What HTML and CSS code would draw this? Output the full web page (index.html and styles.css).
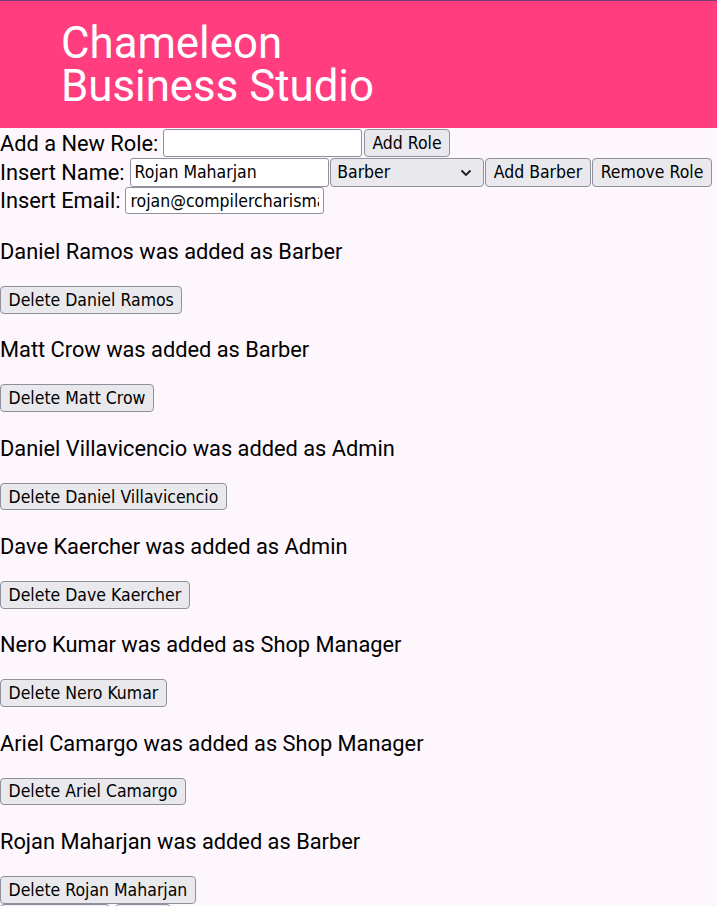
FILE: index.html
```html
<!DOCTYPE html>
<html lang="en">
<head>
<meta charset="utf-8">
<title>Chameleon Business Studio</title>
<link rel="stylesheet" href="styles.css">
</head>
<body>
<header class="site-header">
  <h1 class="site-title">Chameleon<br>Business Studio</h1>
</header>
<main class="page">
  <div class="form-row row-role">
    <label class="field-label" for="role">Add a New Role:</label>
    <input class="text-input" id="role" type="text">
    <button class="btn">Add Role</button>
  </div>
  <div class="form-row row-name">
    <label class="field-label" for="name">Insert Name:</label>
    <input class="text-input tall" id="name" type="text" value="Rojan Maharjan">
    <div class="select-wrap">
      <select class="role-select">
        <option>Barber</option>
        <option>Admin</option>
        <option>Shop Manager</option>
      </select>
      <svg class="chevron" width="12" height="8" viewBox="0 0 12 8"><path d="M1.5 1.5 L6 6 L10.5 1.5" fill="none" stroke="#1a1a1a" stroke-width="1.8"/></svg>
    </div>
    <button class="btn tall">Add Barber</button>
    <button class="btn tall">Remove Role</button>
  </div>
  <div class="form-row row-email">
    <label class="field-label" for="email">Insert Email:</label>
    <input class="text-input" id="email" type="text" value="rojan@compilercharisma.com">
  </div>

  <section class="entries">
    <div class="entry">
      <p class="entry-text">Daniel Ramos was added as Barber</p>
      <div class="entry-actions"><button class="btn">Delete Daniel Ramos</button></div>
    </div>
    <div class="entry">
      <p class="entry-text">Matt Crow was added as Barber</p>
      <div class="entry-actions"><button class="btn">Delete Matt Crow</button></div>
    </div>
    <div class="entry">
      <p class="entry-text">Daniel Villavicencio was added as Admin</p>
      <div class="entry-actions"><button class="btn">Delete Daniel Villavicencio</button></div>
    </div>
    <div class="entry">
      <p class="entry-text">Dave Kaercher was added as Admin</p>
      <div class="entry-actions"><button class="btn">Delete Dave Kaercher</button></div>
    </div>
    <div class="entry">
      <p class="entry-text">Nero Kumar was added as Shop Manager</p>
      <div class="entry-actions"><button class="btn">Delete Nero Kumar</button></div>
    </div>
    <div class="entry">
      <p class="entry-text">Ariel Camargo was added as Shop Manager</p>
      <div class="entry-actions"><button class="btn">Delete Ariel Camargo</button></div>
    </div>
    <div class="entry">
      <p class="entry-text">Rojan Maharjan was added as Barber</p>
      <div class="entry-actions"><button class="btn">Delete Rojan Maharjan</button></div>
    </div>
  </section>
  <div class="footer-actions">
    <button class="btn btn-wide" aria-label="More actions"></button>
    <button class="btn btn-narrow" aria-label="Clear"></button>
  </div>
</main>
</body>
</html>
```
FILE: styles.css
```css
html, body {
  margin: 0;
  padding: 0;
  background: #fdf6fc;
}

body {
  font-family: Roboto, "Liberation Sans", sans-serif;
  font-size: 21.8px;
  color: #000;
}

.site-header {
  background: #ff3d7f;
  border-top: 1px solid #7a3a74;
  height: 127px;
  padding-left: 61px;
}

.site-title {
  margin: 0;
  padding-top: 21px;
  font-size: 43.8px;
  line-height: 42.67px;
  font-weight: 400;
  color: #ffffff;
}

.form-row {
  display: flex;
  align-items: center;
}

.row-role {
  height: 30px;
}

.row-name {
  height: 29px;
}

.row-email {
  height: 27px;
  padding-bottom: 3.4px;
}

.field-label {
  line-height: 25px;
}

.btn,
.text-input,
.role-select {
  font-family: "DejaVu Sans Condensed", "DejaVu Sans", sans-serif;
  font-stretch: condensed;
  font-size: 17.5px;
  color: #000;
}

.text-input {
  box-sizing: border-box;
  width: 199px;
  height: 27.3px;
  margin: 0 0 0 5px;
  padding: 0 4px;
  border: 1px solid #8f8f9d;
  border-radius: 3px;
  background: #ffffff;
}

.text-input.tall {
  height: 28.4px;
}

.btn {
  box-sizing: border-box;
  height: 27.5px;
  margin: 0 0 0 1.5px;
  padding: 0 7.5px;
  border: 1px solid #8f8f9d;
  border-radius: 4px;
  background: #e9e9ed;
  white-space: nowrap;
}

.btn.tall {
  height: 28.4px;
}

.select-wrap {
  position: relative;
  margin-left: 1.6px;
}

.role-select {
  appearance: none;
  -webkit-appearance: none;
  box-sizing: border-box;
  width: 153.5px;
  height: 28.4px;
  padding: 0 0 0 6px;
  border: 1px solid #8f8f9d;
  border-radius: 4px;
  background: #e9e9ed;
  display: block;
}

.chevron {
  position: absolute;
  right: 12px;
  top: 11px;
  pointer-events: none;
}

.entries {
  padding-top: 0.4px;
}

.entry-text {
  margin: 21.33px 0;
  line-height: 25px;
}

.entry-actions {
  height: 30.67px;
  display: flex;
  align-items: flex-start;
  padding-top: 0.7px;
  box-sizing: border-box;
}

.entry-actions .btn {
  margin-left: 0;
}

.footer-actions {
  display: flex;
  gap: 5px;
  margin-top: -2px;
}

.footer-actions .btn {
  margin-left: 0;
}

.btn-wide {
  width: 110px;
}

.btn-narrow {
  width: 56px;
}
```
